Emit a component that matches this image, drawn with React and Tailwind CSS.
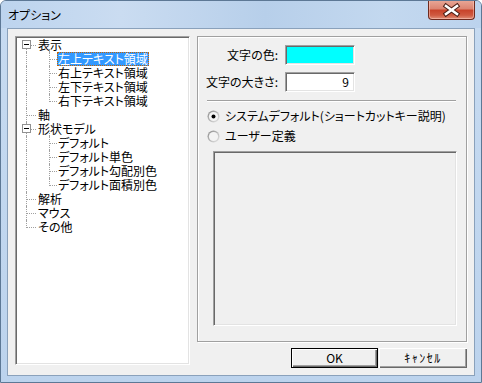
import React from "react";

const rows = [
  { level: 0, text: "表示", box: true, first: true },
  { level: 1, text: "左上テキスト領域", selected: true },
  { level: 1, text: "右上テキスト領域" },
  { level: 1, text: "左下テキスト領域" },
  { level: 1, text: "右下テキスト領域", lastChild: true },
  { level: 0, text: "軸" },
  { level: 0, text: "形状モデル", box: true },
  { level: 1, text: "デフォルト" },
  { level: 1, text: "デフォルト単色" },
  { level: 1, text: "デフォルト勾配別色" },
  { level: 1, text: "デフォルト面積別色", lastChild: true },
  { level: 0, text: "解析" },
  { level: 0, text: "マウス" },
  { level: 0, text: "その他", last: true },
];

function MinusBox() {
  return (
    <svg width="9" height="9" viewBox="0 0 9 9" className="absolute left-[5px] top-[2px]">
      <rect x="0.5" y="0.5" width="8" height="8" fill="#fff" stroke="#919191" />
      <line x1="2" y1="4.5" x2="7" y2="4.5" stroke="#000" strokeWidth="1" />
    </svg>
  );
}

function TreeRow({ r }) {
  const vline = "absolute w-0 border-l border-dotted border-[#a0a0a0]";
  const hline = "absolute h-0 border-t border-dotted border-[#a0a0a0]";
  return (
    <div className="relative h-[14px] flex items-center">
      {r.first ? (
        <span className={`${vline} left-[9px] top-[11px] h-[3px]`} />
      ) : r.last ? (
        <span className={`${vline} left-[9px] top-0 h-[8px]`} />
      ) : (
        <span className={`${vline} left-[9px] top-0 h-[14px]`} />
      )}
      {r.level === 0 && (
        <>
          {r.box ? (
            <>
              <MinusBox />
              <span className={`${hline} left-[14px] top-[7px] w-[5px]`} />
              <span className={`${vline} left-[32px] top-[11px] h-[3px]`} />
            </>
          ) : (
            <span className={`${hline} left-[10px] top-[7px] w-[9px]`} />
          )}
          <span className="block ml-[21px] h-[14px] leading-[14px] whitespace-nowrap">{r.text}</span>
        </>
      )}
      {r.level === 1 && (
        <>
          {r.lastChild ? (
            <span className={`${vline} left-[32px] top-0 h-[8px]`} />
          ) : (
            <span className={`${vline} left-[32px] top-0 h-[14px]`} />
          )}
          <span className={`${hline} left-[33px] top-[7px] w-[7px]`} />
          <span
            className={
              r.selected
                ? "block ml-[40px] px-[1px] h-[14px] leading-[13px] whitespace-nowrap bg-[#3399ff] text-white outline outline-1 outline-dotted outline-[#c66300] -outline-offset-1"
                : "block ml-[40px] px-[1px] h-[14px] leading-[14px] whitespace-nowrap"
            }
          >
            {r.text}
          </span>
        </>
      )}
    </div>
  );
}

function Radio({ checked }) {
  const id = checked ? "rg1" : "rg2";
  return (
    <svg width="13" height="13" viewBox="0 0 13 13" className="shrink-0">
      <defs>
        <linearGradient id={id} x1="0" y1="0" x2="1" y2="1">
          <stop offset="0" stopColor="#8a8a8a" />
          <stop offset="1" stopColor="#e8e8e8" />
        </linearGradient>
      </defs>
      <circle cx="6.5" cy="6.5" r="6" fill={`url(#${id})`} />
      <circle cx="6.5" cy="6.5" r="4.6" fill="#f4f4f4" />
      {checked && <circle cx="6.5" cy="6.5" r="2" fill="#000" />}
    </svg>
  );
}

function CloseButton() {
  return (
    <div className="absolute right-[6px] top-[-1px] w-[47px] h-[20px] rounded-b-[4px] border border-[#6e2a1e] border-t-0 bg-[linear-gradient(180deg,#e9a999_0%,#dc8572_45%,#c8442b_55%,#cf5a41_80%,#e08f78_100%)] shadow-[inset_0_0_0_1px_rgba(255,210,200,0.5)]">
      <svg width="47" height="20" viewBox="0 0 47 20" className="absolute left-[-1px] top-0">
        <path d="M18 6 L29 14 M29 6 L18 14" stroke="#4a1e16" strokeWidth="4.6" strokeLinecap="square" />
        <path d="M18 6 L29 14 M29 6 L18 14" stroke="#fff" strokeWidth="2.6" strokeLinecap="square" />
      </svg>
    </div>
  );
}

const sunken =
  "border border-t-[#a0a0a0] border-l-[#a0a0a0] border-r-white border-b-white shadow-[inset_1px_1px_0_#696969,inset_-1px_-1px_0_#e3e3e3]";

export default function App() {
  return (
    <div className="w-[482px] h-[383px] relative flex flex-col rounded-t-[6px] border border-[#5d7895] bg-[linear-gradient(180deg,#c7dbf1_0%,#bcd3ed_100%)] font-['Noto_Sans_CJK_JP',sans-serif] text-[12px] text-black [font-feature-settings:'palt'] overflow-hidden">
      <div className="h-[27px] shrink-0 relative bg-[linear-gradient(90deg,#bdd4ee_0%,#cadcf1_25%,#b7cfea_55%,#c3d8ef_80%,#bcd3ed_100%)]">
        <span className="absolute left-[7px] top-[7px] leading-[14px]">オプション</span>
        <CloseButton />
      </div>
      <div className="mx-[6px] mb-[6px] flex-1 border border-[#8aa1bb] bg-[#f0f0f0] pt-[7px] pl-[7px] pr-[7px] flex gap-[7px]">
        <div className={`w-[175px] h-[329px] shrink-0 bg-white ${sunken} p-[1px] overflow-hidden`}>
          {rows.map((r, i) => (
            <TreeRow key={i} r={r} />
          ))}
        </div>
        <div className="flex flex-col">
          <div className="w-[270px] h-[306px] border border-[#a0a0a0] shadow-[inset_1px_1px_0_#fff,1px_1px_0_#fff] flex flex-col">
            <div className="mt-[8px] h-[20px] flex items-center">
              <div className="w-[80px] text-right leading-[14px]">文字の色:</div>
              <div className={`ml-[7px] w-[70px] h-[20px] bg-[#00ffff] ${sunken}`} />
            </div>
            <div className="mt-[7px] h-[20px] flex items-center">
              <div className="w-[80px] text-right leading-[14px] whitespace-nowrap">文字の大きさ:</div>
              <div className={`ml-[7px] w-[70px] h-[20px] bg-white ${sunken} flex items-center justify-end pr-[5px] leading-[14px]`}>
                9
              </div>
            </div>
            <div className="mt-[8px] ml-[9px] w-[249px] h-[2px] border-t border-t-[#a0a0a0] border-b border-b-white" />
            <div className="mt-[4px] h-[20px] ml-[9px] flex items-center gap-[5px]">
              <Radio checked />
              <span className="block leading-[14px] whitespace-nowrap">システムデフォルト(ショートカットキー説明)</span>
            </div>
            <div className="h-[20px] ml-[9px] flex items-center gap-[5px]">
              <Radio />
              <span className="block leading-[14px] whitespace-nowrap">ユーザー定義</span>
            </div>
            <div className={`mt-[5px] ml-[15px] w-[244px] h-[175px] bg-[#f0f0f0] ${sunken}`} />
          </div>
          <div className="mt-[6px] flex justify-end gap-[1px]">
            <button className="w-[87px] h-[20px] border border-black bg-[#f0f0f0] shadow-[inset_1px_1px_0_#fff,inset_-1px_-1px_0_#696969,inset_-2px_-2px_0_#a0a0a0] leading-[14px] font-normal">
              OK
            </button>
            <button className="w-[88px] h-[20px] bg-[#f0f0f0] shadow-[inset_1px_1px_0_#fff,inset_-1px_-1px_0_#696969,inset_-2px_-2px_0_#a0a0a0] leading-[14px] font-normal [font-feature-settings:normal] tracking-[1.5px]">
              ｷｬﾝｾﾙ
            </button>
          </div>
        </div>
      </div>
    </div>
  );
}
